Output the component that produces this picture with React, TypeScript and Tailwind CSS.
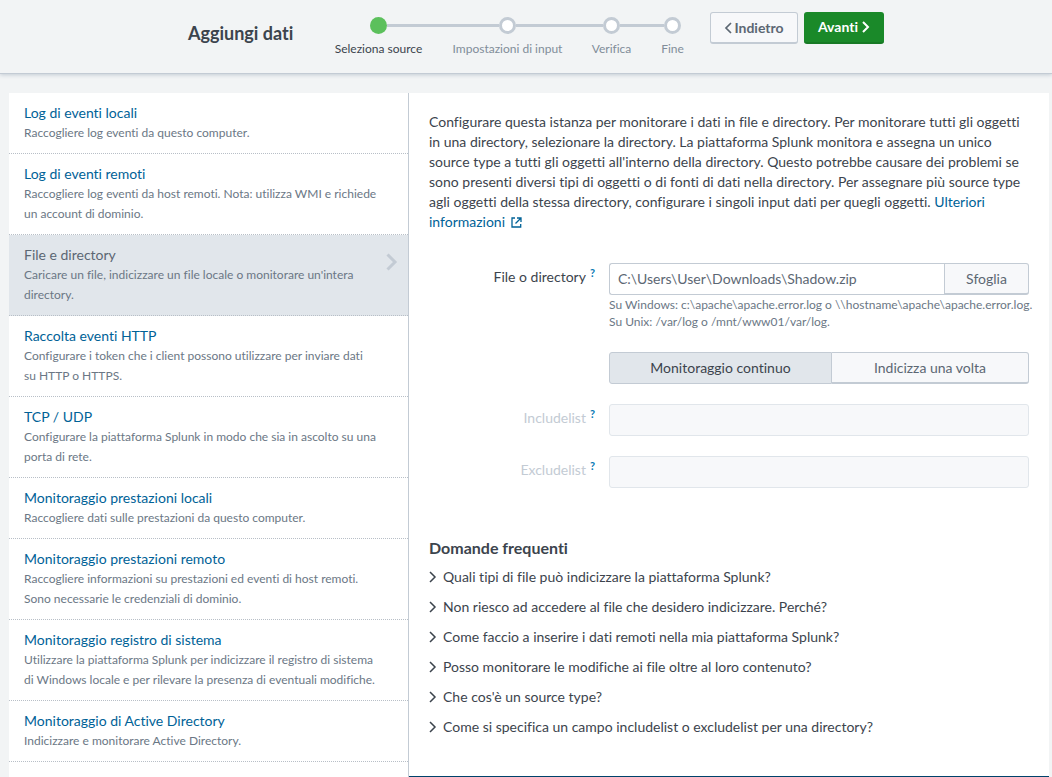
import { Fragment } from "react";

type Source = { title: string; lines: string[] };

const sources: Source[] = [
  { title: "Log di eventi locali", lines: ["Raccogliere log eventi da questo computer."] },
  {
    title: "Log di eventi remoti",
    lines: ["Raccogliere log eventi da host remoti. Nota: utilizza WMI e richiede", "un account di dominio."],
  },
  {
    title: "File e directory",
    lines: ["Caricare un file, indicizzare un file locale o monitorare un'intera", "directory."],
  },
  {
    title: "Raccolta eventi HTTP",
    lines: ["Configurare i token che i client possono utilizzare per inviare dati", "su HTTP o HTTPS."],
  },
  {
    title: "TCP / UDP",
    lines: ["Configurare la piattaforma Splunk in modo che sia in ascolto su una", "porta di rete."],
  },
  { title: "Monitoraggio prestazioni locali", lines: ["Raccogliere dati sulle prestazioni da questo computer."] },
  {
    title: "Monitoraggio prestazioni remoto",
    lines: ["Raccogliere informazioni su prestazioni ed eventi di host remoti.", "Sono necessarie le credenziali di dominio."],
  },
  {
    title: "Monitoraggio registro di sistema",
    lines: [
      "Utilizzare la piattaforma Splunk per indicizzare il registro di sistema",
      "di Windows locale e per rilevare la presenza di eventuali modifiche.",
    ],
  },
  { title: "Monitoraggio di Active Directory", lines: ["Indicizzare e monitorare Active Directory."] },
];

const activeSource = "File e directory";

const intro = [
  "Configurare questa istanza per monitorare i dati in file e directory. Per monitorare tutti gli oggetti",
  "in una directory, selezionare la directory. La piattaforma Splunk monitora e assegna un unico",
  "source type a tutti gli oggetti all'interno della directory. Questo potrebbe causare dei problemi se",
  "sono presenti diversi tipi di oggetti o di fonti di dati nella directory. Per assegnare più source type",
];

const questions = [
  "Quali tipi di file può indicizzare la piattaforma Splunk?",
  "Non riesco ad accedere al file che desidero indicizzare. Perché?",
  "Come faccio a inserire i dati remoti nella mia piattaforma Splunk?",
  "Posso monitorare le modifiche ai file oltre al loro contenuto?",
  "Che cos'è un source type?",
  "Come si specifica un campo includelist o excludelist per una directory?",
];

const steps = [
  { label: "Seleziona source", width: "w-[119px]" },
  { label: "Impostazioni di input", width: "w-[139px]" },
  { label: "Verifica", width: "w-[69px]" },
  { label: "Fine", width: "w-[53px]" },
];

function Chevron({ className, width = 2, left = false }: { className: string; width?: number; left?: boolean }) {
  return (
    <svg viewBox="0 0 8 12" className={className} fill="none" stroke="currentColor" strokeWidth={width} aria-hidden="true">
      <path d={left ? "M7 1 2 6l5 5" : "M1 1l5 5-5 5"} />
    </svg>
  );
}

function Header() {
  return (
    <header className="z-10 flex h-[74px] shrink-0 items-start border-b border-[#c3cbd4] bg-[#f2f4f5] pl-[188px] shadow-[0_1px_4px_#c3cbd4]">
      <h1 className="w-[131px] shrink-0 pt-5 text-lg leading-[26px] font-bold whitespace-nowrap">Aggiungi dati</h1>
      <ol className="flex shrink-0 pt-[17px]">
        {steps.map((step, i) => (
          <li key={step.label} className={`${step.width} flex flex-col items-center`}>
            <div className="flex w-full items-center">
              <span className={`h-[3px] flex-1 ${i > 0 ? "bg-[#c3cbd4]" : ""}`} />
              <span
                className={`size-[17px] rounded-full ${i === 0 ? "bg-[#5cc05c]" : "border-[3px] border-[#c3cbd4] bg-white"}`}
              />
              <span className={`h-[3px] flex-1 ${i < steps.length - 1 ? "bg-[#c3cbd4]" : ""}`} />
            </div>
            <span className={`mt-[5px] text-xs leading-5 whitespace-nowrap ${i === 0 ? "" : "text-[#818d99]"}`}>
              {step.label}
            </span>
          </li>
        ))}
      </ol>
      <div className="ml-[11px] flex shrink-0 gap-[6px] pt-3">
        <button
          type="button"
          className="flex h-8 w-[88px] items-center justify-center gap-[2px] rounded-[3px] border border-b-2 border-[#c3cbd4] bg-[#f7f8fa] text-sm font-bold text-[#5c6773]"
        >
          <Chevron left className="h-3 w-2" width={1.7} />
          Indietro
        </button>
        <button
          type="button"
          className="flex h-8 w-20 items-center justify-center gap-1 rounded-[3px] border-b-2 border-[#187a25] bg-[#1a8929] text-sm font-bold text-white"
        >
          Avanti
          <Chevron className="h-3 w-2" />
        </button>
      </div>
    </header>
  );
}

function SourceList() {
  return (
    <nav className="w-[400px] shrink-0 overflow-hidden border-r border-[#c3cbd4] bg-white">
      {sources.map((s) => {
        const active = s.title === activeSource;
        return (
          <a
            key={s.title}
            href="#"
            className={`flex items-start border-b border-dotted border-[#b8bfc7] py-[10px] pr-[10px] pl-[15px] ${active ? "bg-[#e1e6eb]" : ""}`}
          >
            <span className="flex-1 text-xs leading-5 whitespace-nowrap text-[#6b7785]">
              <span className={`block text-sm leading-5 ${active ? "text-[#5c6773]" : "text-[#006297]"}`}>{s.title}</span>
              {s.lines.map((line) => (
                <span key={line} className="block">
                  {line}
                </span>
              ))}
            </span>
            {active && <Chevron className="mt-2 h-[18px] w-3 text-[#c3cbd4]" />}
          </a>
        );
      })}
    </nav>
  );
}

function FieldLabel({ id, text, disabled = false }: { id: string; text: string; disabled?: boolean }) {
  return (
    <div className="flex w-[180px] shrink-0 justify-end pr-[14px] leading-[28px] whitespace-nowrap">
      <label htmlFor={id} className={disabled ? "text-[#c3cbd4]" : ""}>
        {text}
      </label>
      <a href="#" aria-label={`Guida: ${text}`} className="ml-1 text-[11px] leading-5 font-bold text-[#0a7ab5]">
        ?
      </a>
    </div>
  );
}

function InputForm() {
  return (
    <form className="mt-[31px]" onSubmit={(e) => e.preventDefault()}>
      <div className="flex">
        <FieldLabel id="path" text="File o directory" />
        <div className="min-w-0 flex-1">
          <div className="flex h-8">
            <input
              id="path"
              type="text"
              defaultValue="C:\Users\User\Downloads\Shadow.zip"
              className="min-w-0 flex-1 rounded-l-[3px] border border-r-0 border-[#c3cbd4] bg-white px-2 text-[#5c6773] outline-none"
            />
            <button
              type="button"
              className="w-[85px] rounded-r-[3px] border border-b-2 border-[#c3cbd4] bg-[#f7f8fa] text-[#5c6773]"
            >
              Sfoglia
            </button>
          </div>
          <p className="mt-[1px] text-xs leading-[17px] whitespace-nowrap text-[#6b7785]">
            Su Windows: c:\apache\apache.error.log o \\hostname\apache\apache.error.log.
            <br />
            Su Unix: /var/log o /mnt/www01/var/log.
          </p>
          <div className="mt-[22px] flex h-8">
            <button type="button" aria-pressed="true" className="w-[223px] rounded-l-[3px] border border-[#c3cbd4] bg-[#e1e6eb]">
              Monitoraggio continuo
            </button>
            <button
              type="button"
              aria-pressed="false"
              className="flex-1 rounded-r-[3px] border border-b-2 border-l-0 border-[#c3cbd4] bg-[#f7f8fa] text-[#5c6773]"
            >
              Indicizza una volta
            </button>
          </div>
        </div>
      </div>
      {["Includelist", "Excludelist"].map((name) => (
        <div key={name} className="mt-5 flex">
          <FieldLabel id={name} text={name} disabled />
          <input
            id={name}
            type="text"
            disabled
            className="h-8 min-w-0 flex-1 rounded-[3px] border border-[#e1e6eb] bg-[#f7f8fa] px-2"
          />
        </div>
      ))}
    </form>
  );
}

export default function App() {
  return (
    <div className="flex h-screen flex-col overflow-hidden bg-[#f2f4f5] font-['Lato',sans-serif] text-sm text-[#3c444d] [font-variant-ligatures:none]">
      <Header />
      <div className="flex min-h-0 flex-1 pt-[19px] pr-[3px] pl-[9px]">
        <SourceList />
        <main className="min-w-0 flex-1 overflow-hidden border-b border-[#00426b] bg-white px-5 pt-[19px]">
          <p className="leading-5 whitespace-nowrap">
            {intro.map((line) => (
              <Fragment key={line}>
                {line}
                <br />
              </Fragment>
            ))}
            agli oggetti della stessa directory, configurare i singoli input dati per quegli oggetti.{" "}
            <a href="#" className="text-[#006297]">
              Ulteriori
              <br />
              informazioni
              <svg viewBox="0 0 11 11" className="ml-[6px] inline size-[11px] align-[-1px]" fill="none" stroke="currentColor" aria-hidden="true">
                <path strokeWidth="1.3" d="M4 1H1v9h8.7V7" />
                <path strokeWidth="1.3" d="M6 1h4v4M9.8 1.2 4.5 6.5" />
              </svg>
            </a>
          </p>
          <InputForm />
          <section className="mt-[50px]">
            <h2 className="text-base leading-5 font-bold">Domande frequenti</h2>
            <ul className="mt-1">
              {questions.map((q) => (
                <li key={q}>
                  <button type="button" className="flex h-[30px] items-center gap-[6px] whitespace-nowrap">
                    <Chevron className="h-3 w-2" width={1.5} />
                    {q}
                  </button>
                </li>
              ))}
            </ul>
          </section>
        </main>
      </div>
    </div>
  );
}
